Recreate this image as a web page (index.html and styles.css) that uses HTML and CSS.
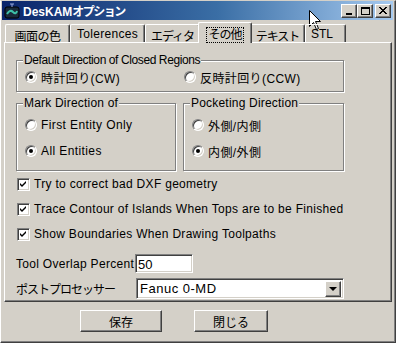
FILE: index.html
```html
<!DOCTYPE html>
<html lang="ja">
<head>
  <meta charset="UTF-8" />
  <title>DesKAMオプション</title>
  <link rel="stylesheet" href="styles.css">
</head>
<body>

<div class="window">
  <div class="titlebar">
    <svg class="app-icon" width="16" height="16" viewBox="0 0 16 16">
      <rect x="1" y="4" width="14" height="11" rx="2" fill="#1a2a3a" stroke="#000" />
      <path d="M3 11 Q6 6 9 9 T13 8" fill="none" stroke="#3ec0a8" stroke-width="2" />
      <path d="M8 4 L8 1 M6 1 L10 1" stroke="#9ad" stroke-width="1" />
    </svg>
    <span class="title">DesKAM<span class="title-ja">オプション</span></span>
    <div class="caption-buttons">
      <span class="cap-btn"><span class="glyph-min"></span></span>
      <span class="cap-btn"><span class="glyph-max"></span></span>
      <span class="cap-btn cap-close">
        <svg width="8" height="7" viewBox="0 0 8 7"><path d="M0 0 L7 7 M1 0 L8 7 M7 0 L0 7 M8 0 L1 7" stroke="#000" stroke-width="1" /></svg>
      </span>
    </div>
  </div>

  <div class="tabs">
    <div class="tab tab-color">画面の色</div>
    <div class="tab tab-tol">Tolerences</div>
    <div class="tab tab-edit">エディタ</div>
    <div class="tab selected"><span class="focus">その他</span></div>
    <div class="tab tab-text">テキスト</div>
    <div class="tab tab-stl">STL</div>
  </div>

  <div class="panel">
    <fieldset class="group group-wide">
      <legend>Default Direction of Closed Regions</legend>
      <div class="radio-row">
        <label class="radio first checked"><span class="dot"></span>時計回り(CW)</label>
        <label class="radio"><span class="dot"></span>反時計回り(CCW)</label>
      </div>
    </fieldset>

    <div class="group-pair">
      <fieldset class="group group-half">
        <legend>Mark Direction of</legend>
        <label class="radio"><span class="dot"></span>First Entity Only</label>
        <label class="radio checked"><span class="dot"></span>All Entities</label>
      </fieldset>
      <fieldset class="group group-half">
        <legend>Pocketing Direction</legend>
        <label class="radio"><span class="dot"></span>外側/内側</label>
        <label class="radio checked"><span class="dot"></span>内側/外側</label>
      </fieldset>
    </div>

    <div class="checks">
      <label class="check"><span class="box"><svg width="7" height="7" viewBox="0 0 7 7"><path d="M0 2 L2 4 L6 0 L6 2 L2 6 L0 4 Z" fill="#000" /></svg></span>Try to correct bad DXF geometry</label>
      <label class="check"><span class="box"><svg width="7" height="7" viewBox="0 0 7 7"><path d="M0 2 L2 4 L6 0 L6 2 L2 6 L0 4 Z" fill="#000" /></svg></span>Trace Contour of Islands When Tops are to be Finished</label>
      <label class="check"><span class="box"><svg width="7" height="7" viewBox="0 0 7 7"><path d="M0 2 L2 4 L6 0 L6 2 L2 6 L0 4 Z" fill="#000" /></svg></span>Show Boundaries When Drawing Toolpaths</label>
    </div>

    <div class="field field-overlap">
      <span class="field-label">Tool Overlap Percent</span>
      <span class="textbox">50</span>
    </div>
    <div class="field field-post">
      <span class="field-label label-ja">ポストプロセッサー</span>
      <span class="combo">
        <span class="combo-text">Fanuc 0-MD</span>
        <span class="combo-btn"><span class="arrow"></span></span>
      </span>
    </div>
  </div>

  <div class="actions">
    <span class="button btn-save">保存</span>
    <span class="button btn-close">閉じる</span>
  </div>

  <svg class="cursor" width="13" height="21" viewBox="0 0 13 21">
    <path d="M0.5 0.5 L0.5 16.5 L4.5 12.5 L7.5 19.5 L9.5 18.5 L6.5 11.5 L11.5 11.5 Z" fill="#fff" stroke="#000" stroke-width="1" />
  </svg>
</div>

</body>
</html>
```

FILE: styles.css
```css
body {
  margin: 0;
  font-family: "Liberation Sans", "Noto Sans CJK JP", sans-serif;
  font-size: 12px;
  color: #000;
  background: #d4d0c8;
}
.window {
  position: relative;
  width: 396px;
  height: 343px;
  box-sizing: border-box;
  background: #d4d0c8;
  border-left: 1px solid #fff;
  border-top: 1px solid #d4d0c8;
  border-right: 1px solid #404040;
  border-bottom: 1px solid #404040;
  box-shadow: inset -1px -1px 0 #808080;
  padding: 0 2px 0 1px;
  overflow: hidden;
}

/* title bar */
.titlebar {
  height: 19px;
  display: flex;
  align-items: center;
  background: linear-gradient(to right, #0a246a, #3a6ea5 55%, #a6caf0);
  padding-left: 2px;
}
.app-icon {
  margin-right: 3px;
}
.title {
  color: #fff;
  font-weight: bold;
  font-size: 12px;
}
.title-ja {
  letter-spacing: -1.5px;
}
.caption-buttons {
  margin-left: auto;
  display: flex;
  margin-right: 2px;
}
.cap-btn {
  width: 16px;
  height: 14px;
  box-sizing: border-box;
  background: #d4d0c8;
  border-left: 1px solid #fff;
  border-top: 1px solid #fff;
  border-right: 1px solid #404040;
  border-bottom: 1px solid #404040;
  box-shadow: inset -1px -1px 0 #808080;
  display: flex;
  align-items: center;
  justify-content: center;
}
.cap-close {
  margin-left: 2px;
}
.glyph-min {
  width: 6px;
  height: 2px;
  background: #000;
  margin-top: 6px;
}
.glyph-max {
  width: 9px;
  height: 8px;
  box-sizing: border-box;
  border: 1px solid #000;
  border-top-width: 2px;
}

/* tabs */
.tabs {
  display: flex;
  align-items: flex-end;
  height: 21px;
  padding-left: 3px;
  margin-top: 1px;
  position: relative;
  z-index: 1;
}
.tab {
  height: 18px;
  box-sizing: border-box;
  padding-top: 2px;
  text-align: center;
  border-left: 1px solid #fff;
  border-top: 1px solid #fff;
  border-right: 1px solid #404040;
  box-shadow: inset -1px 0 0 #808080;
  border-radius: 2px 2px 0 0;
  white-space: nowrap;
}
.tab-color {
  width: 65px;
  letter-spacing: -0.5px;
}
.tab-tol {
  width: 75px;
  letter-spacing: 0.3px;
}
.tab-edit {
  width: 55px;
  letter-spacing: -1px;
}
.tab.selected {
  width: 54px;
  height: 21px;
  margin: 0 -2px;
  letter-spacing: -1px;
  background: #d4d0c8;
  position: relative;
  top: 1px;
}
.focus {
  outline: 1px dotted #000;
  padding: 0 1px;
}
.tab-text {
  width: 55px;
  letter-spacing: -1px;
}
.tab-stl {
  width: 41px;
  text-align: left;
  padding-left: 5px;
}

/* tab page */
.panel {
  height: 260px;
  box-sizing: border-box;
  margin-left: 2px;
  margin-right: 1px;
  border-left: 1px solid #fff;
  border-top: 1px solid #fff;
  border-right: 1px solid #404040;
  border-bottom: 1px solid #404040;
  box-shadow: inset -1px -1px 0 #808080;
  padding: 10px 0 0 11px;
}
.group {
  margin: 0;
  min-width: 0;
  box-sizing: border-box;
  border: 1px solid #808080;
  box-shadow: 1px 1px 0 #fff, inset 1px 1px 0 #fff;
  padding: 0 8px;
}
.group legend {
  line-height: 14px;
  padding: 0 1px;
  margin-left: -2px;
  background: #d4d0c8;
  letter-spacing: 0.2px;
}
.group-wide {
  width: 328px;
  height: 39px;
  padding-top: 3px;
}
.group-wide legend {
  letter-spacing: -0.4px;
}
.radio-row {
  display: flex;
}
.group-pair {
  display: flex;
  gap: 7px;
  margin-top: 4px;
}
.group-half {
  width: 160px;
  height: 75px;
  padding-top: 8px;
  display: flex;
  flex-direction: column;
  gap: 12px;
}
.group-half + .group-half {
  width: 161px;
}
.radio {
  display: flex;
  align-items: center;
  gap: 4px;
  height: 14px;
  letter-spacing: 0.4px;
  white-space: nowrap;
}
.radio.first {
  width: 159px;
}
.dot {
  width: 12px;
  height: 12px;
  box-sizing: border-box;
  border-radius: 50%;
  background: #fff;
  border: 1px solid;
  border-color: #808080 #fff #fff #808080;
  box-shadow: inset 1px 1px 0 #404040, inset -1px -1px 0 #d4d0c8;
  display: flex;
  align-items: center;
  justify-content: center;
}
.radio.checked .dot::after {
  content: "";
  width: 4px;
  height: 4px;
  border-radius: 50%;
  background: #000;
}

/* check boxes */
.checks {
  display: flex;
  flex-direction: column;
  gap: 11px;
  margin-top: 6px;
  padding-left: 1px;
}
.check {
  display: flex;
  align-items: center;
  gap: 4px;
  height: 14px;
  letter-spacing: 0.3px;
  white-space: nowrap;
}
.box {
  width: 13px;
  height: 13px;
  box-sizing: border-box;
  background: #fff;
  border: 1px solid;
  border-color: #808080 #fff #fff #808080;
  box-shadow: inset 1px 1px 0 #404040, inset -1px -1px 0 #d4d0c8;
  display: flex;
  align-items: center;
  justify-content: center;
}

/* fields */
.field {
  display: flex;
  align-items: center;
}
.field-label {
  width: 119px;
  letter-spacing: 0.3px;
  white-space: nowrap;
}
.label-ja {
  letter-spacing: -1px;
}
.field-overlap {
  margin-top: 13px;
}
.field-post {
  margin-top: 5px;
}
.textbox {
  width: 58px;
  height: 19px;
  box-sizing: border-box;
  background: #fff;
  border: 1px solid;
  border-color: #808080 #fff #fff #808080;
  box-shadow: inset 1px 1px 0 #404040, inset -1px -1px 0 #d4d0c8;
  padding: 2px 0 0 2px;
  font-size: 13px;
}
.combo {
  width: 208px;
  height: 21px;
  margin-left: 1px;
  box-sizing: border-box;
  background: #fff;
  border: 1px solid;
  border-color: #808080 #fff #fff #808080;
  box-shadow: inset 1px 1px 0 #404040, inset -1px -1px 0 #d4d0c8;
  display: flex;
  align-items: center;
  padding: 2px;
}
.combo-text {
  flex: 1;
  padding-left: 1px;
  font-size: 13px;
  letter-spacing: 0.5px;
}
.combo-btn {
  width: 16px;
  height: 16px;
  box-sizing: border-box;
  background: #d4d0c8;
  border-left: 1px solid #fff;
  border-top: 1px solid #fff;
  border-right: 1px solid #404040;
  border-bottom: 1px solid #404040;
  box-shadow: inset -1px -1px 0 #808080;
  display: flex;
  align-items: center;
  justify-content: center;
}
.arrow {
  width: 0;
  height: 0;
  border-left: 4px solid transparent;
  border-right: 4px solid transparent;
  border-top: 4px solid #000;
}

/* bottom buttons */
.actions {
  display: flex;
  padding: 8px 0 0 78px;
  gap: 32px;
}
.button {
  height: 22px;
  box-sizing: border-box;
  background: #d4d0c8;
  border-left: 1px solid #fff;
  border-top: 1px solid #fff;
  border-right: 1px solid #404040;
  border-bottom: 1px solid #404040;
  box-shadow: inset -1px -1px 0 #808080;
  display: flex;
  align-items: center;
  justify-content: center;
}
.btn-save {
  width: 82px;
}
.btn-close {
  width: 74px;
}

.cursor {
  position: absolute;
  left: 308px;
  top: 9px;
}
```
